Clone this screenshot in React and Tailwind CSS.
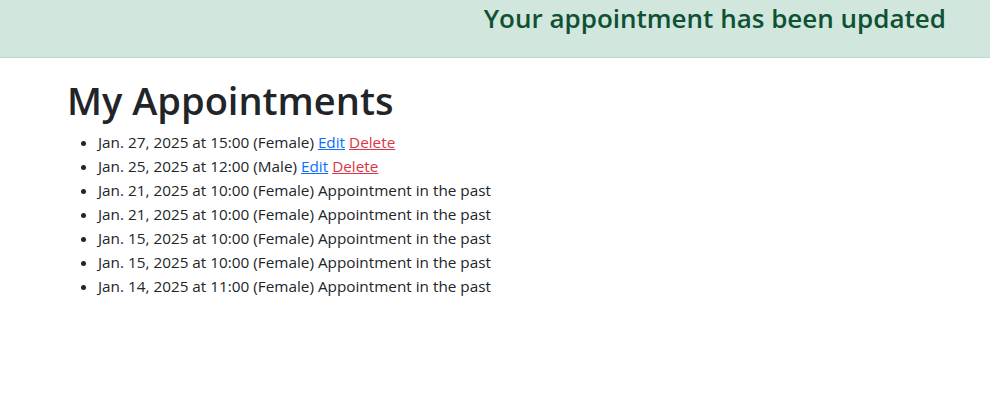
export default function App() {
  const items = [
    ["Jan. 27, 2025 at 15:00 (Female)", true],
    ["Jan. 25, 2025 at 12:00 (Male)", true],
    ["Jan. 21, 2025 at 10:00 (Female)", false],
    ["Jan. 21, 2025 at 10:00 (Female)", false],
    ["Jan. 15, 2025 at 10:00 (Female)", false],
    ["Jan. 15, 2025 at 10:00 (Female)", false],
    ["Jan. 14, 2025 at 11:00 (Female)", false],
  ];
  return (
    <div className="w-[990px] h-[410px] bg-white text-[#212529]" style={{ fontFamily: '"Open Sans", "Noto Sans", sans-serif' }}>
      <div className="h-[58px] bg-[#d1e7dd] border-b border-[#badbcc] flex justify-end pr-[44px]">
        <h3 className="text-[26px] leading-[36px] text-[#0f5132] font-semibold">Your appointment has been updated</h3>
      </div>
      <div className="pl-[67px]">
        <h1 className="text-[38px] leading-[48px] font-semibold mt-[18px] mb-[6px]">My Appointments</h1>
        <ul className="list-disc pl-[31px] text-[15.3px] leading-[24px]">
          {items.map(([t, active], i) => (
            <li key={i}>
              {t}{" "}
              {active ? (
                <>
                  <a href="#" className="text-[#0d6efd] underline">Edit</a>{" "}
                  <a href="#" className="text-[#dc3545] underline">Delete</a>
                </>
              ) : (
                "Appointment in the past"
              )}
            </li>
          ))}
        </ul>
      </div>
    </div>
  );
}
